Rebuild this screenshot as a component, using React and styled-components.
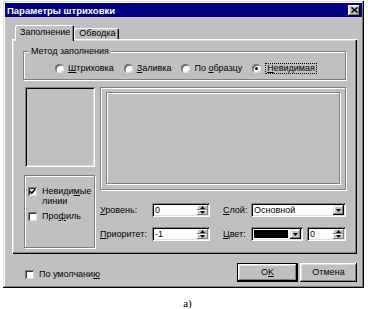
import React from "react";
import styled, { createGlobalStyle } from "styled-components";

const GlobalStyle = createGlobalStyle`
  html, body { margin: 0; padding: 0; background: #fff; }
  body {
    font-family: "Liberation Sans", Arial, sans-serif;
    font-size: 9px;
    color: #000;
  }
  * { box-sizing: border-box; }
`;

const raised = `inset -1px -1px #000, inset 1px 1px #fff, inset -2px -2px #808080, inset 2px 2px #dfdfdf`;
const sunken = `inset 1px 1px #808080, inset -1px -1px #fff, inset 2px 2px #000, inset -2px -2px #dfdfdf`;
const etched = `border: 1px solid #808080; box-shadow: inset 1px 1px #fff, 1px 1px #fff;`;

const Page = styled.div`
  width: 368px;
  padding: 1px 0 0 3px;
`;

const Window = styled.div`
  width: 361px;
  background: #c0c0c0;
  padding: 2px;
  box-shadow: inset -1px -1px #000, inset 1px 1px #dfdfdf, inset -2px -2px #808080, inset 2px 2px #fff;
  display: flex;
  flex-direction: column;
`;

const TitleBar = styled.div`
  height: 14px;
  background: #000080;
  color: #fff;
  display: flex;
  align-items: center;
  justify-content: space-between;
  padding: 0 2px 0 2px;
`;

const Title = styled.span`
  font-weight: bold;
  font-size: 9.5px;
`;

const CloseButton = styled.div`
  width: 12px;
  height: 11px;
  background: #c0c0c0;
  box-shadow: ${raised};
  display: flex;
  align-items: center;
  justify-content: center;
`;

const Body = styled.div`
  padding: 0 5px 4px 7px;
`;

const TabRow = styled.div`
  display: flex;
  align-items: flex-end;
  height: 14px;
  margin-top: 8px;
  padding-left: 3px;
`;

const Tab = styled.div`
  position: relative;
  z-index: 1;
  height: ${(p) => (p.$active ? 16 : 11)}px;
  margin-bottom: ${(p) => (p.$active ? -2 : 0)}px;
  padding: 0 4px ${(p) => (p.$active ? 2 : 0)}px 5px;
  display: flex;
  align-items: center;
  background: #c0c0c0;
  border-radius: 2px 2px 0 0;
  box-shadow: inset 1px 1px #fff, inset -1px 0 #000, inset -2px 0 #808080;
  line-height: 11px;
`;

const Panel = styled.div`
  padding: 12px 11px 6px 11px;
  box-shadow: inset 1px 1px #fff, inset -1px -1px #000, inset -2px -2px #808080, inset 2px 2px #dfdfdf;
`;

const GroupBox = styled.div`
  position: relative;
  ${etched}
  padding: 10px 0 5px;
`;

const GroupLegend = styled.span`
  position: absolute;
  top: -6px;
  left: 5px;
  padding: 0 2px;
  background: #c0c0c0;
  line-height: 11px;
`;

const RadioRow = styled.div`
  display: flex;
  justify-content: center;
  align-items: center;
  gap: 10px;
  height: 12px;
  padding-left: 3px;
`;

const RadioItem = styled.div`
  display: flex;
  align-items: center;
  gap: 4px;
  line-height: 11px;
`;

const RadioCircle = styled.div`
  width: 9px;
  height: 9px;
  border-radius: 50%;
  background: #fff;
  box-shadow: inset 1px 1px #808080, inset -1px -1px #dfdfdf, inset 1.5px 1.5px #404040;
  display: flex;
  align-items: center;
  justify-content: center;
`;

const RadioDot = styled.div`
  width: 3px;
  height: 3px;
  border-radius: 50%;
  background: #000;
`;

const Focus = styled.span`
  border: 1px dotted #000;
  padding: 0 1px;
  line-height: 9px;
`;

const Main = styled.div`
  display: grid;
  grid-template-columns: 71px 246px;
  column-gap: 5px;
  margin-top: 7px;
  padding-left: 1px;
`;

const LeftCol = styled.div`
  display: flex;
  flex-direction: column;
  gap: 8px;
`;

const PreviewBox = styled.div`
  height: 80px;
  margin-left: 1px;
  box-shadow: ${sunken};
`;

const CheckGroup = styled.div`
  height: 73px;
  ${etched}
  padding: 10px 3px 0 3px;
  display: flex;
  flex-direction: column;
  gap: 5px;
`;

const CheckItem = styled.div`
  display: flex;
  align-items: flex-start;
  gap: 5px;
  line-height: 10px;
`;

const CheckBox = styled.div`
  flex-shrink: 0;
  width: 9px;
  height: 9px;
  margin-top: 1px;
  background: #fff;
  box-shadow: inset 1px 1px #808080, inset -1px -1px #dfdfdf, inset 2px 2px #303030;
  display: flex;
  align-items: center;
  justify-content: center;
`;

const RightCol = styled.div`
  display: flex;
  flex-direction: column;
`;

const PreviewFrame = styled.div`
  height: 103px;
  ${etched}
  padding: 4px 5px 5px 5px;
  display: flex;
`;

const PreviewInner = styled.div`
  flex: 1;
  ${etched}
`;

const Fields = styled.div`
  margin-top: 13px;
  display: grid;
  grid-template-columns: 52px 58px 41px 95px;
  grid-auto-rows: 14px;
  row-gap: 10px;
  align-items: center;
`;

const FieldLabel = styled.div`
  padding-left: ${(p) => (p.$indent ? 13 : 0)}px;
  line-height: 11px;
`;

const SpinField = styled.div`
  height: 14px;
  width: ${(p) => p.$w}px;
  background: #fff;
  box-shadow: ${sunken};
  padding: 2px;
  display: flex;
`;

const FieldValue = styled.div`
  flex: 1;
  padding-left: 1px;
  line-height: 10px;
  white-space: nowrap;
`;

const Spinner = styled.div`
  width: 11px;
  display: flex;
  flex-direction: column;
`;

const SpinBtn = styled.div`
  flex: 1;
  background: #c0c0c0;
  box-shadow: inset -1px -1px #808080, inset 1px 1px #fff;
  display: flex;
  align-items: center;
  justify-content: center;
`;

const Combo = styled.div`
  height: 14px;
  width: ${(p) => p.$w}px;
  background: #fff;
  box-shadow: ${sunken};
  padding: 2px;
  display: flex;
`;

const DropBtn = styled.div`
  width: 11px;
  background: #c0c0c0;
  box-shadow: inset -1px -1px #000, inset 1px 1px #dfdfdf, inset -2px -2px #808080, inset 2px 2px #fff;
  display: flex;
  align-items: center;
  justify-content: center;
`;

const Swatch = styled.div`
  flex: 1;
  margin: 1px 2px 1px 1px;
  background: #000;
`;

const ColorRow = styled.div`
  display: flex;
  gap: 4px;
`;

const Footer = styled.div`
  margin-top: 9px;
  padding-left: 13px;
  display: flex;
  justify-content: space-between;
  align-items: center;
`;

const FooterCheck = styled(CheckItem)`
  margin-top: 2px;
  align-items: center;
  gap: 5px;
`;

const Buttons = styled.div`
  display: flex;
  gap: 2px;
`;

const Button = styled.div`
  width: ${(p) => p.$w}px;
  height: 19px;
  background: #c0c0c0;
  border: ${(p) => (p.$default ? "1px solid #000" : "none")};
  box-shadow: ${raised};
  display: flex;
  align-items: center;
  justify-content: center;
  line-height: 11px;
`;

const Caption = styled.div`
  margin-top: 9px;
  text-align: center;
  font-family: "Liberation Serif", "Times New Roman", serif;
  font-size: 11px;
  line-height: 12px;
  padding-left: 4px;
`;

const U = styled.span`
  text-decoration: underline;
  text-underline-offset: 1px;
`;

const UpArrow = () => (
  <svg width="5" height="3" viewBox="0 0 5 3">
    <polygon points="2.5,0 5,3 0,3" fill="#000" />
  </svg>
);

const DownArrow = ({ w = 5, h = 3 }) => (
  <svg width={w} height={h} viewBox="0 0 5 3">
    <polygon points="0,0 5,0 2.5,3" fill="#000" />
  </svg>
);

const Check = () => (
  <svg width="7" height="7" viewBox="0 0 7 7">
    <polyline points="0.8,3.2 2.6,5.2 6.2,1.2" fill="none" stroke="#000" strokeWidth="1.6" />
  </svg>
);

const Spin = ({ w, value }) => (
  <SpinField $w={w}>
    <FieldValue>{value}</FieldValue>
    <Spinner>
      <SpinBtn>
        <UpArrow />
      </SpinBtn>
      <SpinBtn>
        <DownArrow />
      </SpinBtn>
    </Spinner>
  </SpinField>
);

const Radio = ({ checked, children }) => (
  <RadioItem>
    <RadioCircle>{checked && <RadioDot />}</RadioCircle>
    {children}
  </RadioItem>
);

export default function App() {
  return (
    <Page>
      <GlobalStyle />
      <Window>
        <TitleBar>
          <Title>Параметры штриховки</Title>
          <CloseButton>
            <svg width="7" height="6" viewBox="0 0 7 6">
              <path d="M0.5 0.5 L6.5 5.5 M6.5 0.5 L0.5 5.5" stroke="#000" strokeWidth="1.5" />
            </svg>
          </CloseButton>
        </TitleBar>
        <Body>
          <TabRow>
            <Tab $active>Заполнение</Tab>
            <Tab>Обводка</Tab>
          </TabRow>
          <Panel>
            <GroupBox>
              <GroupLegend>Метод заполнения</GroupLegend>
              <RadioRow>
                <Radio>
                  <span><U>Ш</U>триховка</span>
                </Radio>
                <Radio>
                  <span><U>З</U>аливка</span>
                </Radio>
                <Radio>
                  <span>По <U>о</U>бразцу</span>
                </Radio>
                <Radio checked>
                  <Focus><U>Н</U>евидимая</Focus>
                </Radio>
              </RadioRow>
            </GroupBox>
            <Main>
              <LeftCol>
                <PreviewBox />
                <CheckGroup>
                  <CheckItem>
                    <CheckBox>
                      <Check />
                    </CheckBox>
                    <span>
                      Невиди<U>м</U>ые
                      <br />
                      линии
                    </span>
                  </CheckItem>
                  <CheckItem>
                    <CheckBox />
                    <span>Про<U>ф</U>иль</span>
                  </CheckItem>
                </CheckGroup>
              </LeftCol>
              <RightCol>
                <PreviewFrame>
                  <PreviewInner />
                </PreviewFrame>
                <Fields>
                  <FieldLabel><U>У</U>ровень:</FieldLabel>
                  <Spin w={58} value="0" />
                  <FieldLabel $indent><U>С</U>лой:</FieldLabel>
                  <Combo $w={95}>
                    <FieldValue>Основной</FieldValue>
                    <DropBtn>
                      <DownArrow />
                    </DropBtn>
                  </Combo>
                  <FieldLabel><U>П</U>риоритет:</FieldLabel>
                  <Spin w={58} value="-1" />
                  <FieldLabel $indent><U>Ц</U>вет:</FieldLabel>
                  <ColorRow>
                    <Combo $w={52}>
                      <Swatch />
                      <DropBtn>
                        <DownArrow />
                      </DropBtn>
                    </Combo>
                    <Spin w={39} value="0" />
                  </ColorRow>
                </Fields>
              </RightCol>
            </Main>
          </Panel>
          <Footer>
            <FooterCheck>
              <CheckBox />
              <span>По умолчани<U>ю</U></span>
            </FooterCheck>
            <Buttons>
              <Button $w={61} $default>
                <span>O<U>K</U></span>
              </Button>
              <Button $w={57}>Отмена</Button>
            </Buttons>
          </Footer>
        </Body>
      </Window>
      <Caption>а)</Caption>
    </Page>
  );
}
